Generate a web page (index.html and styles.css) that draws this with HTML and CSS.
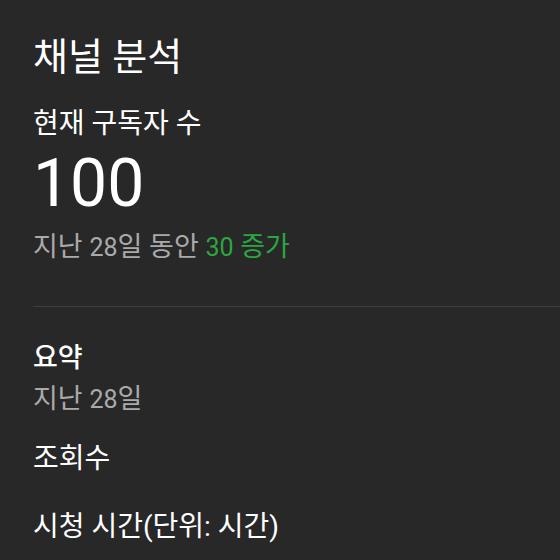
FILE: index.html
```html
<!DOCTYPE html>
<html lang="ko">
<head>
    <meta charset="UTF-8">
    <title>채널 분석</title>
    <link rel="stylesheet" href="styles.css">
</head>
<body>
    <div class="analytics">
        <h1 class="page-title">채널 분석</h1>

        <div class="subscribers">
            <h2 class="card-label">현재 구독자 수</h2>
            <div class="big-number">100</div>
            <p class="period">지난 <span class="num">28</span>일 동안 <span class="increase"><span class="num">30</span> 증가</span></p>
        </div>

        <hr class="divider">

        <div class="summary">
            <h2 class="section-title">요약</h2>
            <p class="period">지난 <span class="num">28</span>일</p>
            <div class="metric">조회수</div>
            <div class="metric">시청 시간(단위: 시간)</div>
        </div>
    </div>
</body>
</html>
```

FILE: styles.css
```css
body {
    margin: 0;
    background-color: #282828;
    color: #ffffff;
    font-family: Roboto, "Noto Sans CJK KR", sans-serif;
}
.analytics {
    padding: 33px 0 0 33px;
}
.page-title {
    margin: 0;
    font-size: 38px;
    font-weight: 400;
    line-height: 48px;
}
.subscribers {
    margin-top: 25px;
}
.card-label {
    margin: 0;
    font-size: 28px;
    font-weight: 400;
    line-height: 36px;
}
.big-number {
    margin-top: 2px;
    font-size: 66px;
    line-height: 80px;
}
.period {
    margin: 5px 0 0 0;
    font-size: 27px;
    line-height: 36px;
    color: #aaaaaa;
}
.num {
    font-size: 25px;
}
.increase {
    color: #2ba640;
}
.divider {
    margin: 40px 0 0 0;
    border: none;
    border-top: 1px solid #3e3e3e;
}
.summary {
    padding-top: 33px;
}
.section-title {
    margin: 0;
    font-size: 27px;
    font-weight: 500;
    line-height: 36px;
}
.metric {
    margin-top: 23px;
    font-size: 28px;
    line-height: 36px;
}
.metric + .metric {
    margin-top: 32px;
}
```
